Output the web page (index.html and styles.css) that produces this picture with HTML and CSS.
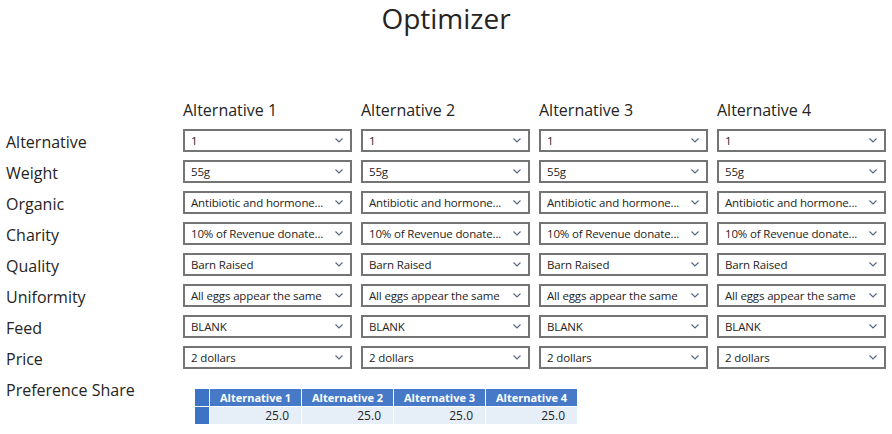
FILE: index.html
```html
<!DOCTYPE html>
<html lang="en">

<head>
    <meta charset="utf-8">
    <meta name="viewport" content="width=device-width, initial-scale=1.0">
    <title>Optimizer</title>
    <link rel="stylesheet" href="styles.css">
</head>

<body>
    <h1 class="title">Optimizer</h1>

    <main class="optimizer">
        <div></div>
        <div class="colhead">Alternative 1</div>
        <div class="colhead">Alternative 2</div>
        <div class="colhead">Alternative 3</div>
        <div class="colhead">Alternative 4</div>
    </main>

    <script>
        const rows = [
            ["Alternative", "1"],
            ["Weight", "55g"],
            ["Organic", "Antibiotic and hormone..."],
            ["Charity", "10% of Revenue donate..."],
            ["Quality", "Barn Raised"],
            ["Uniformity", "All eggs appear the same"],
            ["Feed", "BLANK"],
            ["Price", "2 dollars"]
        ];
        const chevron = '<svg class="chev" width="8" height="5" viewBox="0 0 8 5"><path d="M0.5 0.5 L4 4 L7.5 0.5" fill="none" stroke="#56657f" stroke-width="1.1"/></svg>';
        const grid = document.querySelector(".optimizer");

        rows.forEach(row => {
            const label = document.createElement("div");
            label.className = "label";
            label.textContent = row[0];
            grid.appendChild(label);
            for (let i = 0; i < 4; i++) {
                const box = document.createElement("div");
                box.className = "dropdown";
                box.innerHTML = '<span class="value"></span>' + chevron;
                box.querySelector(".value").textContent = row[1];
                grid.appendChild(box);
            }
        });

        const share = document.createElement("div");
        share.className = "label";
        share.textContent = "Preference Share";
        grid.appendChild(share);

        const table = document.createElement("table");
        table.className = "share";
        let html = '<tr><th class="corner"></th>';
        for (let i = 1; i <= 4; i++) html += "<th>Alternative " + i + "</th>";
        html += '</tr><tr><td class="corner"></td>';
        for (let i = 1; i <= 4; i++) html += "<td>25.0</td>";
        html += "</tr>";
        table.innerHTML = html;
        grid.appendChild(table);
    </script>
</body>

</html>
```

FILE: styles.css
```css
body {
    margin: 0;
    font-family: "Open Sans", sans-serif;
    color: #252423;
}

.title {
    margin: 0;
    height: 98px;
    font-size: 28px;
    font-weight: 400;
    line-height: 36px;
    text-align: center;
}

.optimizer {
    display: grid;
    grid-template-columns: 168px repeat(4, 169px);
    grid-template-rows: repeat(9, 23px) auto;
    column-gap: 9px;
    row-gap: 8px;
    padding-left: 6px;
}

.colhead {
    font-size: 16px;
    line-height: 24px;
}

.label {
    font-size: 16px;
    line-height: 26px;
}

.dropdown {
    display: flex;
    align-items: center;
    border: 2px solid #747474;
    padding: 0 7px 0 6px;
    font-size: 11.5px;
    letter-spacing: -0.15px;
    background: #fff;
}

.value {
    flex: 1;
    white-space: nowrap;
    padding-right: 5px;
}

.chev {
    flex: none;
}

.share {
    grid-column: 2 / 6;
    justify-self: start;
    align-self: start;
    margin: 11px 0 0 11px;
    border-collapse: separate;
    border-spacing: 1px;
    font-size: 11px;
}

.share th {
    background: #4679c7;
    color: #fff;
    font-weight: 700;
    width: 87px;
    height: 17px;
    padding: 0 2px;
    text-align: center;
    white-space: nowrap;
}

.share td {
    background: #e6eef8;
    height: 17px;
    padding: 0 12px 0 0;
    font-size: 12px;
    text-align: right;
}

.share .corner {
    background: #3d73c4;
    width: 14px;
    padding: 0;
}
```
